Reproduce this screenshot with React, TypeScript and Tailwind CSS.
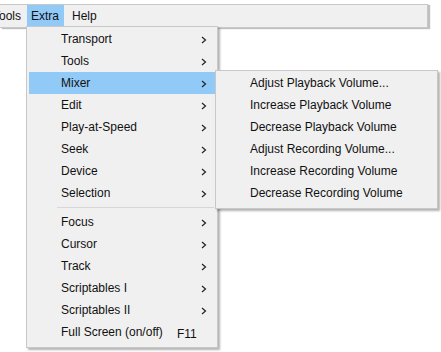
import React from "react";

const font = { fontFamily: '"Liberation Sans", Arial, sans-serif' };

type Item = { label: string; arrow?: boolean; shortcut?: string; active?: boolean } | "sep";

const mainItems: Item[] = [
  { label: "Transport", arrow: true },
  { label: "Tools", arrow: true },
  { label: "Mixer", arrow: true, active: true },
  { label: "Edit", arrow: true },
  { label: "Play-at-Speed", arrow: true },
  { label: "Seek", arrow: true },
  { label: "Device", arrow: true },
  { label: "Selection", arrow: true },
  "sep",
  { label: "Focus", arrow: true },
  { label: "Cursor", arrow: true },
  { label: "Track", arrow: true },
  { label: "Scriptables I", arrow: true },
  { label: "Scriptables II", arrow: true },
  { label: "Full Screen (on/off)", shortcut: "F11" },
];

const subItems = [
  "Adjust Playback Volume...",
  "Increase Playback Volume",
  "Decrease Playback Volume",
  "Adjust Recording Volume...",
  "Increase Recording Volume",
  "Decrease Recording Volume",
];

function Chevron() {
  return (
    <svg
      className="absolute left-[172px] top-[8px]"
      width="6"
      height="8"
      viewBox="0 0 6 8"
    >
      <path d="M1 1 L4.5 4 L1 7" fill="none" stroke="#222" strokeWidth="1.2" />
    </svg>
  );
}

export default function App() {
  return (
    <div
      className="relative w-[441px] h-[352px] bg-white overflow-hidden text-[12px] text-[#111]"
      style={font}
    >
      {/* menu bar */}
      <div className="mt-[4px] w-[428px] h-[24px] bg-[#f0f0f0] border-t border-b border-r border-[#c8c8c8] shadow-[2px_1px_1px_rgba(0,0,0,0.25)] flex items-start">
        <div className="h-[21px] ml-[-7px] w-[34px] flex items-center">Tools</div>
        <div className="h-[21px] w-[37px] bg-[#91c9f7] flex items-center pl-[4px]">Extra</div>
        <div className="h-[21px] flex items-center pl-[8px]">Help</div>
      </div>

      {/* main menu */}
      <div className="absolute left-[26px] top-[26px] w-[192px] bg-[#f0f0f0] border border-[#c8c8c8] shadow-[2px_2px_2px_rgba(0,0,0,0.3)] pt-[1px] pb-[4px] px-[2px]">
        {mainItems.map((it, i) =>
          it === "sep" ? (
            <div key={i} className="h-[7px] flex items-center pl-[28px] pr-[1px]">
              <div className="h-px w-full bg-[#d7d7d7]" />
            </div>
          ) : (
            <div
              key={i}
              className={`relative h-[22px] flex items-center pl-[32px] ${it.active ? "bg-[#91c9f7]" : ""}`}
            >
              <span>{it.label}</span>
              {it.arrow && <Chevron />}
              {it.shortcut && (
                <span className="absolute left-[148px] top-[4px]">{it.shortcut}</span>
              )}
            </div>
          )
        )}
      </div>

      {/* submenu */}
      <div className="absolute left-[215px] top-[70px] w-[223px] bg-[#f0f0f0] border border-[#c8c8c8] shadow-[2px_2px_2px_rgba(0,0,0,0.3)] pt-[1px] pb-[4px] px-[2px]">
        {subItems.map((s) => (
          <div key={s} className="h-[22px] flex items-center pl-[32px]">
            {s}
          </div>
        ))}
      </div>
    </div>
  );
}
